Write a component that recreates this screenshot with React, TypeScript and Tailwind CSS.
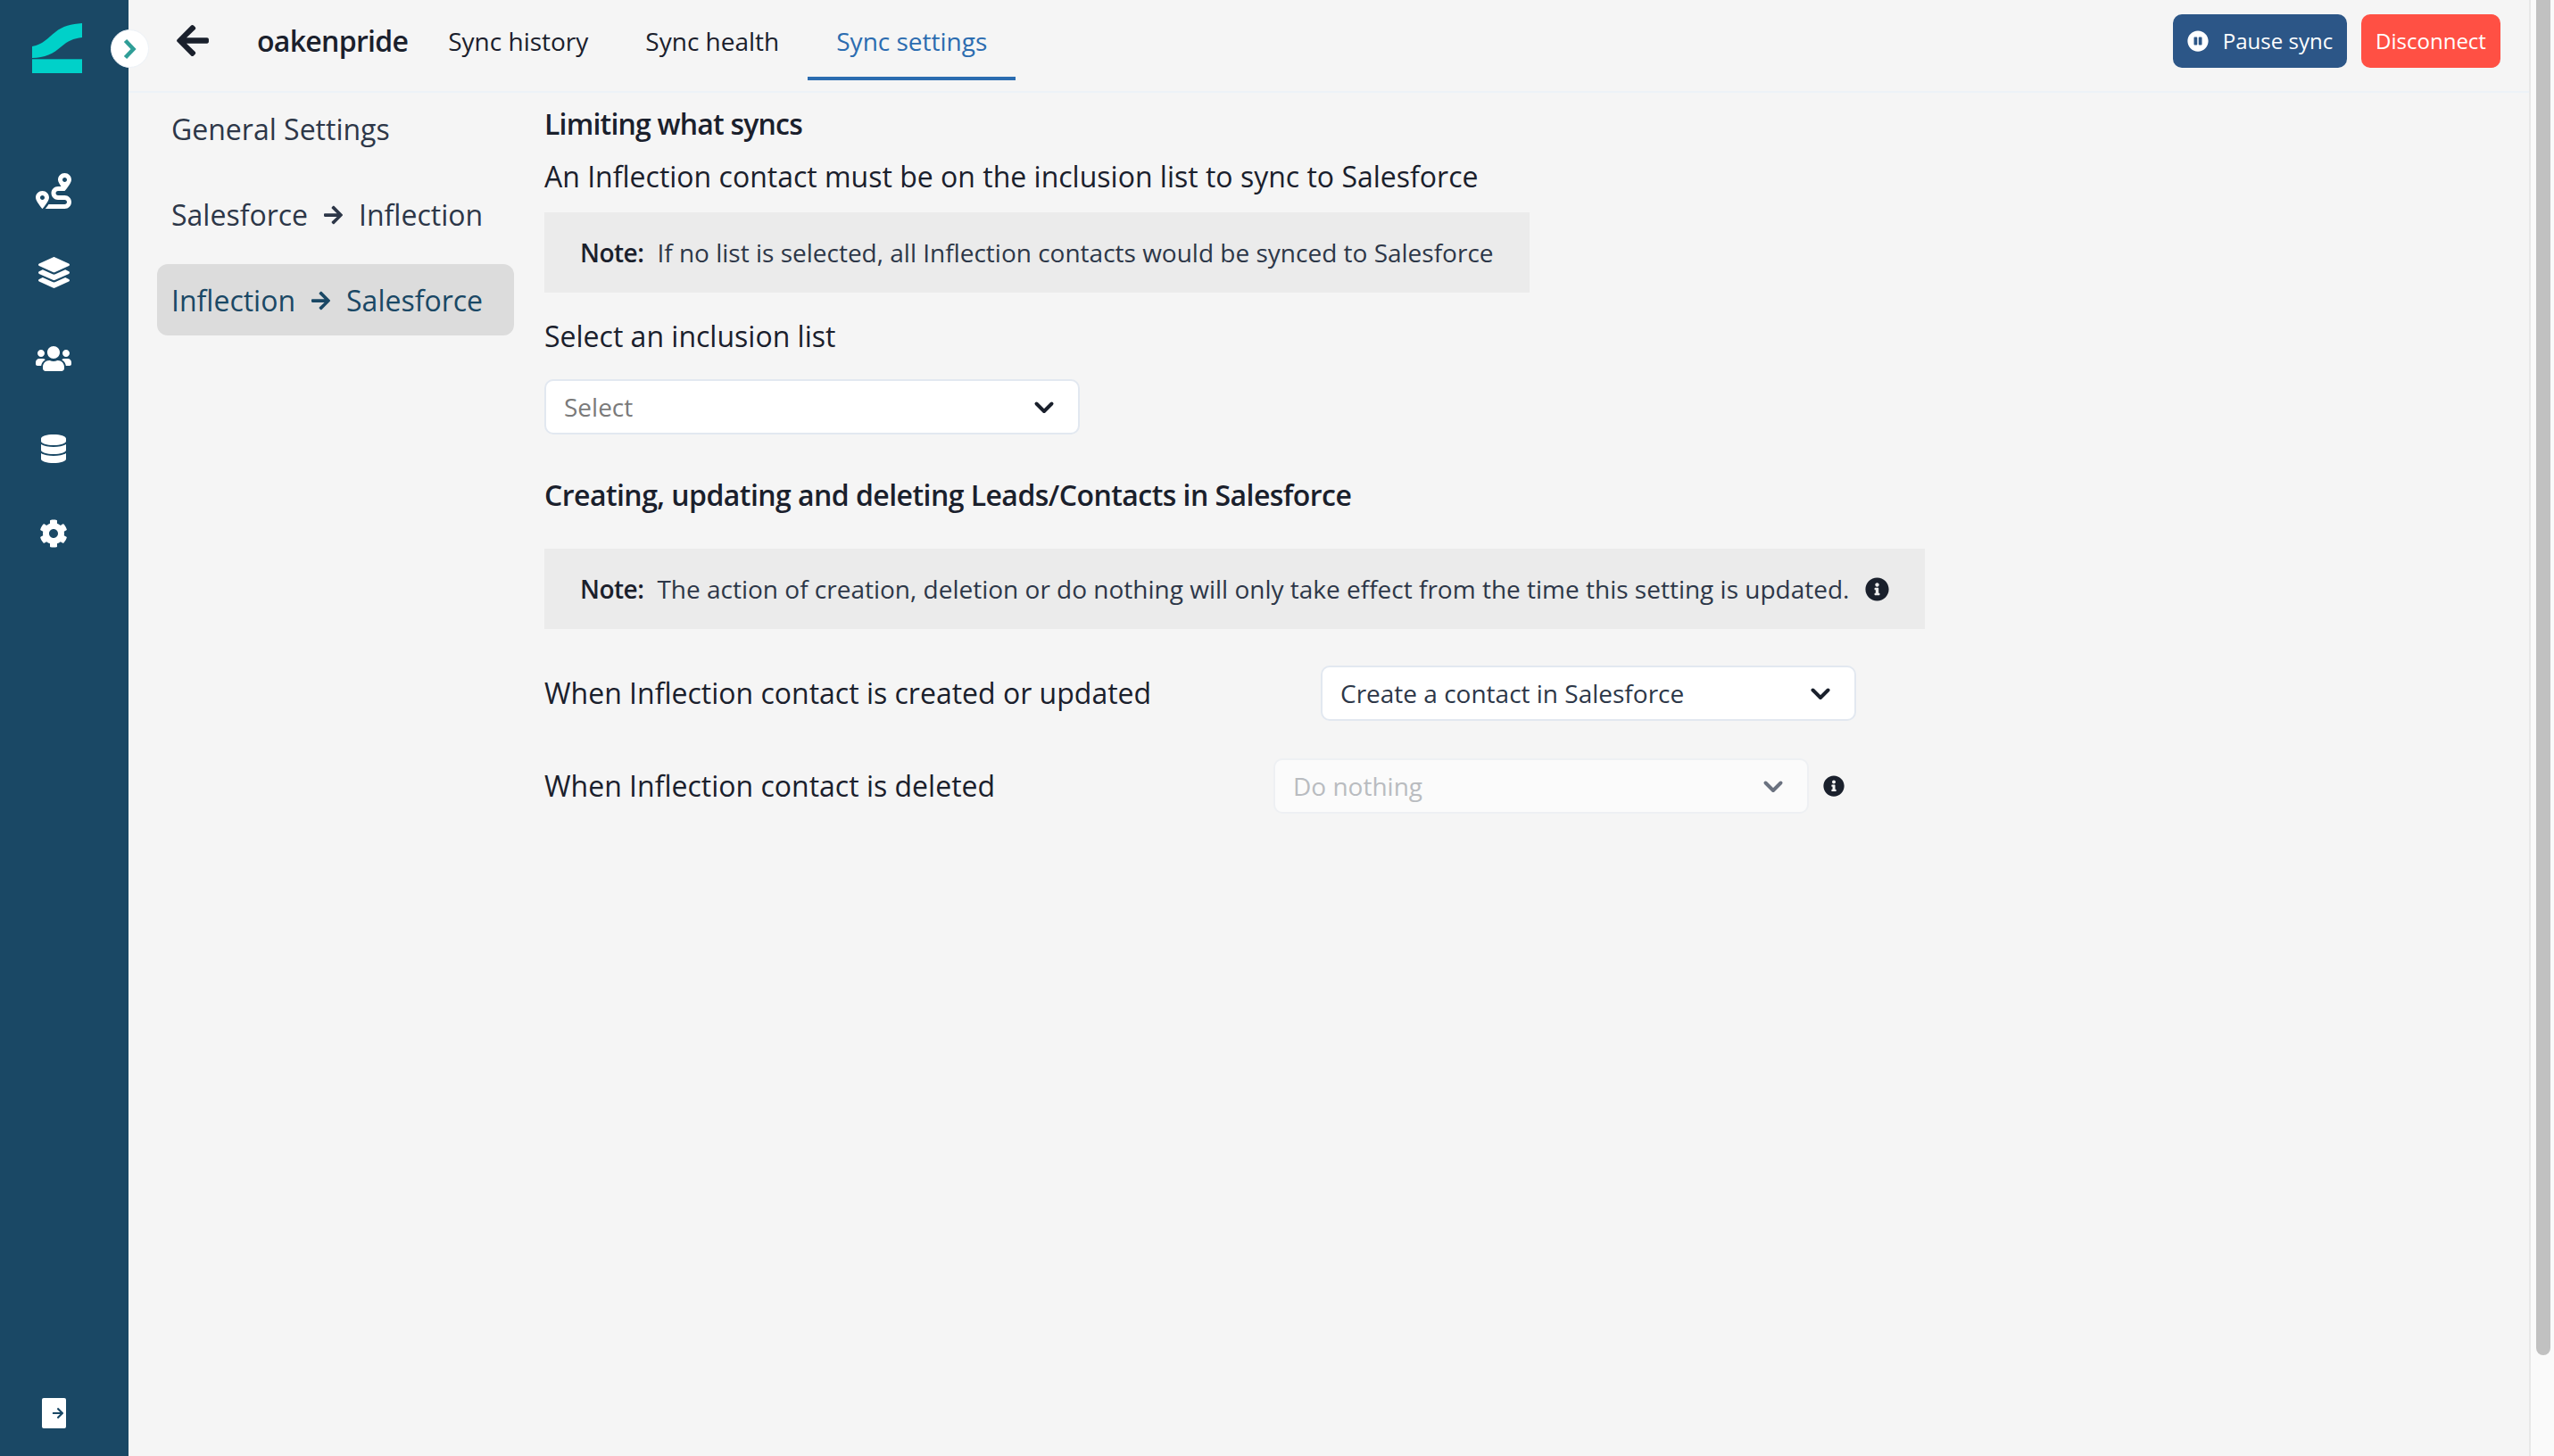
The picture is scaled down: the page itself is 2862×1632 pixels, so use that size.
import { FaArrowLeft, FaArrowRight, FaCog, FaDatabase, FaInfoCircle, FaLayerGroup, FaPauseCircle, FaRoute, FaUsers } from 'react-icons/fa';

const font = { fontFamily: '"Open Sans", sans-serif' };

function Logo() {
  return (
    <svg viewBox="0 0 56 56" className="w-[56px] h-[56px]" fill="#00d1c9">
      <path d="M0 26C12 24 18 16 26 10C34 3 44 1 56 0V16C46 17 40 20 33 26C24 34 14 39 0 39Z" />
      <rect x="0" y="40" width="56" height="16" />
      <rect x="0" y="40" width="56" height="1" fill="#04a9ab" />
    </svg>
  );
}

function Chevron({ className }: { className: string }) {
  return (
    <svg viewBox="0 0 24 16" className={`w-[24px] h-[16px] ${className}`} fill="none" stroke="currentColor" strokeWidth="4" strokeLinecap="round" strokeLinejoin="round">
      <path d="M3.5 4.5L12 13L20.5 4.5" />
    </svg>
  );
}

function Sidebar() {
  return (
    <div className="relative w-[144px] shrink-0 bg-[#1a4865] flex flex-col text-white">
      <div className="pl-[36px] pt-[26px]">
        <Logo />
      </div>
      <div className="w-[120px] flex flex-col items-center">
        <FaRoute className="mt-[112px] w-[40px] h-[40px]" />
        <FaLayerGroup className="mt-[54px] w-[35px] h-[35px]" />
        <FaUsers className="mt-[63px] w-[40px] h-[32px]" />
        <FaDatabase className="mt-[69px] w-[32px] h-[32px]" />
        <FaCog className="mt-[63px] w-[32px] h-[32px]" />
      </div>
      <div className="mt-auto w-[120px] pb-[31px] flex justify-center">
        <div className="w-[27px] h-[34px] bg-white rounded-[2px] flex items-center justify-end">
          <FaArrowRight className="w-[18px] h-[14px] text-[#1a4865]" />
        </div>
      </div>
      <button className="absolute left-[124px] top-[33px] z-10 w-[43px] h-[43px] rounded-full bg-white border border-[#edf2f7] flex items-center justify-center">
        <svg viewBox="0 0 15 24" className="w-[15px] h-[24px] text-[#2f9e97]" fill="none" stroke="currentColor" strokeWidth="4.5">
          <path d="M2.5 2.5L11.5 12L2.5 21.5" />
        </svg>
      </button>
    </div>
  );
}

function Header() {
  const tabs = ['Sync history', 'Sync health', 'Sync settings'];
  return (
    <div className="h-[104px] shrink-0 border-b-2 border-[#edf2f7] flex items-start pl-[54px] pr-[32px]">
      <FaArrowLeft className="mt-[25px] w-[36px] h-[41px] text-[#1a202c]" />
      <div className="ml-[54px] mt-[26px] text-[32px] leading-[40px] font-semibold text-[#1a202c] tracking-[-0.7px]">oakenpride</div>
      <div className="ml-[13px] flex h-[90px]">
        {tabs.map((tab) => {
          const active = tab === 'Sync settings';
          return (
            <div
              key={tab}
              className={`px-[32px] pt-[26px] text-[28px] leading-[40px] border-b-[4px] ${
                active ? 'border-[#2b6cb0] text-[#2b6cb0]' : 'border-transparent text-[#1a202c]'
              }`}
            >
              {tab}
            </div>
          );
        })}
      </div>
      <div className="ml-auto mt-[16px] flex gap-[16px] text-white text-[24px]">
        <button className="w-[195px] h-[60px] rounded-[10px] bg-[#2c5687] flex items-center justify-center gap-[16px]">
          <FaPauseCircle className="w-[24px] h-[24px]" />
          Pause sync
        </button>
        <button className="w-[156px] h-[60px] rounded-[10px] bg-[#ff5044] flex items-center justify-center">
          Disconnect
        </button>
      </div>
    </div>
  );
}

function LeftNav() {
  const arrow = <FaArrowRight className="mx-[18px] w-[21px] h-[24px]" />;
  return (
    <div className="w-[400px] shrink-0 flex flex-col gap-[16px] text-[32px] leading-[40px] text-[#2d3748]">
      <div className="h-[80px] px-[16px] pt-[2px] flex items-center whitespace-nowrap">General Settings</div>
      <div className="h-[80px] px-[16px] pt-[2px] flex items-center whitespace-nowrap">
        Salesforce{arrow}Inflection
      </div>
      <div className="h-[80px] px-[16px] pt-[2px] flex items-center whitespace-nowrap rounded-[12px] bg-[#dcdcdc] text-[#1a4865]">
        Inflection{arrow}Salesforce
      </div>
    </div>
  );
}

function Select({ value, width, disabled }: { value: string; width: string; disabled?: boolean }) {
  return (
    <div
      className={`${width} h-[62px] rounded-[10px] border-2 flex items-center justify-between pl-[20px] pr-[26px] text-[28px] ${
        disabled ? 'bg-[#fbfbfb] border-[#eef0f3] text-[#b9bcc0]' : 'bg-white border-[#e2e8f0]'
      }`}
    >
      <span className={value === 'Select' ? 'text-[#7a7a7a]' : disabled ? '' : 'text-[#2d3748]'}>{value}</span>
      <Chevron className={disabled ? 'text-[#6b7280]' : 'text-[#1a202c]'} />
    </div>
  );
}

function Note({ children, width }: { children: React.ReactNode; width: string }) {
  return (
    <div className={`${width} h-[90px] bg-[#ebebeb] pl-[40px] flex items-center text-[28px] text-[#2d3748] whitespace-nowrap`}>
      <span className="font-semibold text-[#1a202c] mr-[15px] tracking-[-0.5px]">Note:</span>
      {children}
    </div>
  );
}

function Settings() {
  return (
    <div className="ml-[34px] text-[#1a202c] flex flex-col">
      <div className="mt-[13px] text-[32px] leading-[44px] font-semibold tracking-[-0.8px]">Limiting what syncs</div>
      <div className="mt-[15px] text-[32px] leading-[44px] whitespace-nowrap">An Inflection contact must be on the inclusion list to sync to Salesforce</div>
      <div className="mt-[18px]">
        <Note width="w-[1104px]">If no list is selected, all Inflection contacts would be synced to Salesforce</Note>
      </div>
      <div className="mt-[27px] text-[32px] leading-[44px]">Select an inclusion list</div>
      <div className="mt-[26px]">
        <Select value="Select" width="w-[600px]" />
      </div>
      <div className="mt-[46px] text-[32px] leading-[44px] font-semibold tracking-[-0.55px]">Creating, updating and deleting Leads/Contacts in Salesforce</div>
      <div className="mt-[38px]">
        <Note width="w-[1547px]">
          The action of creation, deletion or do nothing will only take effect from the time this setting is updated.
          <FaInfoCircle className="ml-[18px] w-[27px] h-[27px] text-[#1a202c]" />
        </Note>
      </div>
      <div className="mt-[41px] flex items-center">
        <div className="w-[870px] text-[32px]">When Inflection contact is created or updated</div>
        <Select value="Create a contact in Salesforce" width="w-[600px]" />
      </div>
      <div className="mt-[42px] flex items-center">
        <div className="w-[817px] text-[32px]">When Inflection contact is deleted</div>
        <Select value="Do nothing" width="w-[600px]" disabled />
        <FaInfoCircle className="ml-[16px] w-[24px] h-[24px] text-[#1a202c]" />
      </div>
    </div>
  );
}

export default function App() {
  return (
    <div className="h-screen w-full flex overflow-hidden bg-[#f5f5f5]" style={font}>
      <Sidebar />
      <div className="flex-1 flex flex-col min-w-0">
        <Header />
        <div className="flex-1 flex pl-[32px]">
          <LeftNav />
          <Settings />
        </div>
      </div>
      <div className="w-[28px] shrink-0 border-l-2 border-[#e8e8e8] bg-[#fafafa] pl-[6px]">
        <div className="w-[16px] h-[1519px] rounded-b-full bg-[#c1c1c1]" />
      </div>
    </div>
  );
}
